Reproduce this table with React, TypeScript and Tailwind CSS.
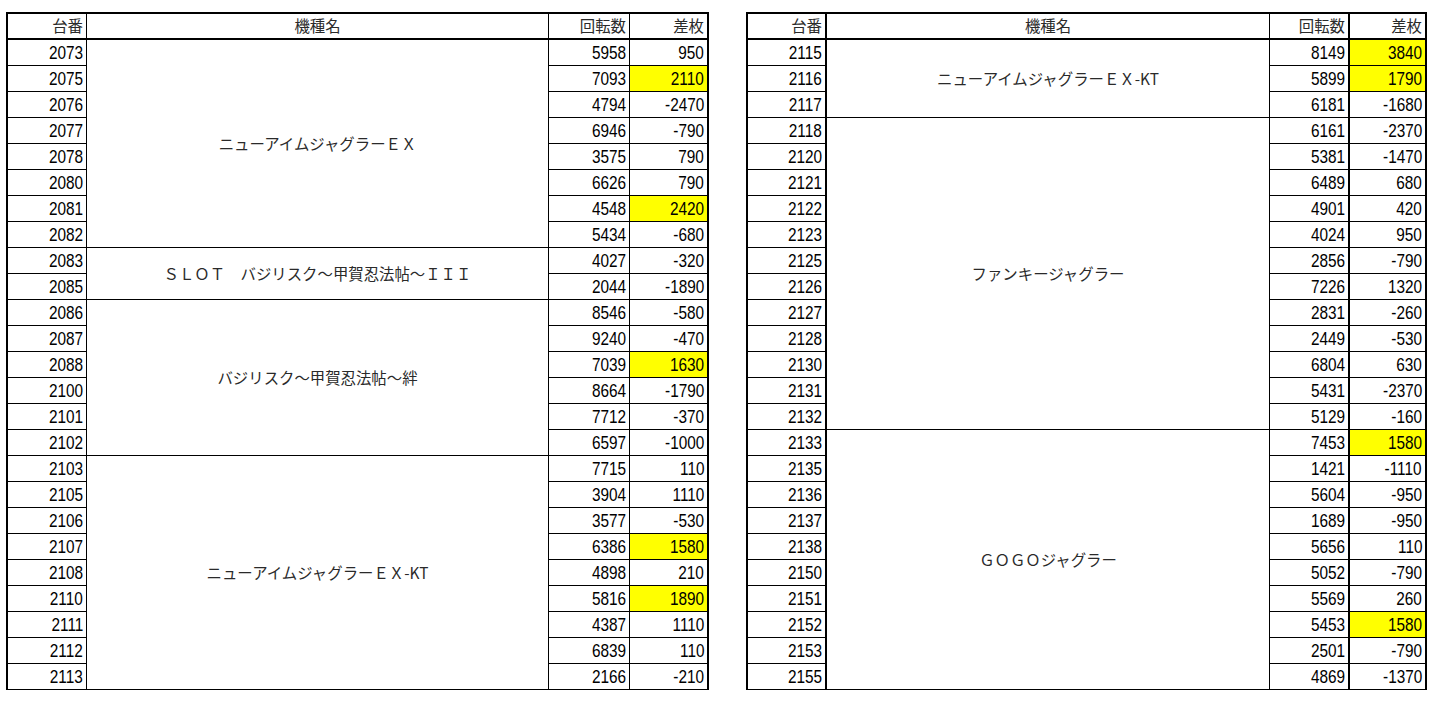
import React from "react";

type Row = [string, string, string, boolean?];
type Group = { name: string; rows: Row[] };

const leftGroups: Group[] = [
  {
    name: "ニューアイムジャグラーＥＸ",
    rows: [
      ["2073", "5958", "950"],
      ["2075", "7093", "2110", true],
      ["2076", "4794", "-2470"],
      ["2077", "6946", "-790"],
      ["2078", "3575", "790"],
      ["2080", "6626", "790"],
      ["2081", "4548", "2420", true],
      ["2082", "5434", "-680"],
    ],
  },
  {
    name: "ＳＬＯＴ　バジリスク～甲賀忍法帖～ＩＩＩ",
    rows: [
      ["2083", "4027", "-320"],
      ["2085", "2044", "-1890"],
    ],
  },
  {
    name: "バジリスク～甲賀忍法帖～絆",
    rows: [
      ["2086", "8546", "-580"],
      ["2087", "9240", "-470"],
      ["2088", "7039", "1630", true],
      ["2100", "8664", "-1790"],
      ["2101", "7712", "-370"],
      ["2102", "6597", "-1000"],
    ],
  },
  {
    name: "ニューアイムジャグラーＥＸ-KT",
    rows: [
      ["2103", "7715", "110"],
      ["2105", "3904", "1110"],
      ["2106", "3577", "-530"],
      ["2107", "6386", "1580", true],
      ["2108", "4898", "210"],
      ["2110", "5816", "1890", true],
      ["2111", "4387", "1110"],
      ["2112", "6839", "110"],
      ["2113", "2166", "-210"],
    ],
  },
];

const rightGroups: Group[] = [
  {
    name: "ニューアイムジャグラーＥＸ-KT",
    rows: [
      ["2115", "8149", "3840", true],
      ["2116", "5899", "1790", true],
      ["2117", "6181", "-1680"],
    ],
  },
  {
    name: "ファンキージャグラー",
    rows: [
      ["2118", "6161", "-2370"],
      ["2120", "5381", "-1470"],
      ["2121", "6489", "680"],
      ["2122", "4901", "420"],
      ["2123", "4024", "950"],
      ["2125", "2856", "-790"],
      ["2126", "7226", "1320"],
      ["2127", "2831", "-260"],
      ["2128", "2449", "-530"],
      ["2130", "6804", "630"],
      ["2131", "5431", "-2370"],
      ["2132", "5129", "-160"],
    ],
  },
  {
    name: "ＧＯＧＯジャグラー",
    rows: [
      ["2133", "7453", "1580", true],
      ["2135", "1421", "-1110"],
      ["2136", "5604", "-950"],
      ["2137", "1689", "-950"],
      ["2138", "5656", "110"],
      ["2150", "5052", "-790"],
      ["2151", "5569", "260"],
      ["2152", "5453", "1580", true],
      ["2153", "2501", "-790"],
      ["2155", "4869", "-1370"],
    ],
  },
];

const jp = "font-['Noto_Sans_CJK_JP',sans-serif] text-[15.4px] text-[#2a2a2a]";

function Num({ v }: { v: string }) {
  return (
    <span className="inline-block origin-right scale-x-[0.83] font-['Liberation_Sans',sans-serif] text-[18.5px] leading-none text-black">
      {v}
    </span>
  );
}

type Widths = { c1: string; c2: string; c3: string; c4: string; b1: string; b3: string; b4: string };

function DataTable({ groups, widths, tableW }: { groups: Group[]; widths: Widths; tableW: string }) {
  return (
    <table className={`table-fixed border-separate border-spacing-0 ${tableW}`}>
      <colgroup>
        <col className={widths.c1} />
        <col className={widths.c2} />
        <col className={widths.c3} />
        <col className={widths.c4} />
      </colgroup>
      <thead>
        <tr>
          <th className={`h-[28px] border-l-2 border-t-2 border-b-2 ${widths.b1} border-black p-0 pr-[3px] text-right align-middle font-normal ${jp}`}>
            台番
          </th>
          <th className={`h-[28px] border-t-2 border-b-2 border-r border-black p-0 text-center align-middle font-normal ${jp}`}>
            機種名
          </th>
          <th className={`h-[28px] border-t-2 border-b-2 ${widths.b3} border-black p-0 pr-[3px] text-right align-middle font-normal ${jp}`}>
            回転数
          </th>
          <th className={`h-[28px] border-t-2 border-b-2 ${widths.b4} border-black p-0 pr-[3px] text-right align-middle font-normal ${jp}`}>
            差枚
          </th>
        </tr>
      </thead>
      <tbody>
        {groups.map((g) =>
          g.rows.map((r, i) => (
            <tr key={r[0]}>
              <td className={`h-[26px] border-l-2 border-b ${widths.b1} border-black p-0 pr-[3px] text-right align-middle`}>
                <Num v={r[0]} />
              </td>
              {i === 0 && (
                <td
                  rowSpan={g.rows.length}
                  className={`border-b border-r border-black p-0 text-center align-middle whitespace-nowrap ${jp}`}
                >
                  {g.name}
                </td>
              )}
              <td className={`h-[26px] border-b ${widths.b3} border-black p-0 pr-[3px] text-right align-middle`}>
                <Num v={r[1]} />
              </td>
              <td
                className={`h-[26px] border-b ${widths.b4} border-black p-0 pr-[3px] text-right align-middle ${
                  r[3] ? "bg-[#ffff00]" : "bg-white"
                }`}
              >
                <Num v={r[2]} />
              </td>
            </tr>
          ))
        )}
      </tbody>
    </table>
  );
}

export default function App() {
  return (
    <div className="min-h-[702px] w-[1435px] bg-white pl-[6px] pt-[12px]">
      <div className="flex items-start gap-[37px]">
        <DataTable
          groups={leftGroups}
          tableW="w-[703px]"
          widths={{
            c1: "w-[81px]",
            c2: "w-[462px]",
            c3: "w-[81px]",
            c4: "w-[79px]",
            b1: "border-r",
            b3: "border-r",
            b4: "border-r-2",
          }}
        />
        <DataTable
          groups={rightGroups}
          tableW="w-[681px]"
          widths={{
            c1: "w-[81px]",
            c2: "w-[443px]",
            c3: "w-[80px]",
            c4: "w-[77px]",
            b1: "border-r-2",
            b3: "border-r-2",
            b4: "border-r-2",
          }}
        />
      </div>
    </div>
  );
}
